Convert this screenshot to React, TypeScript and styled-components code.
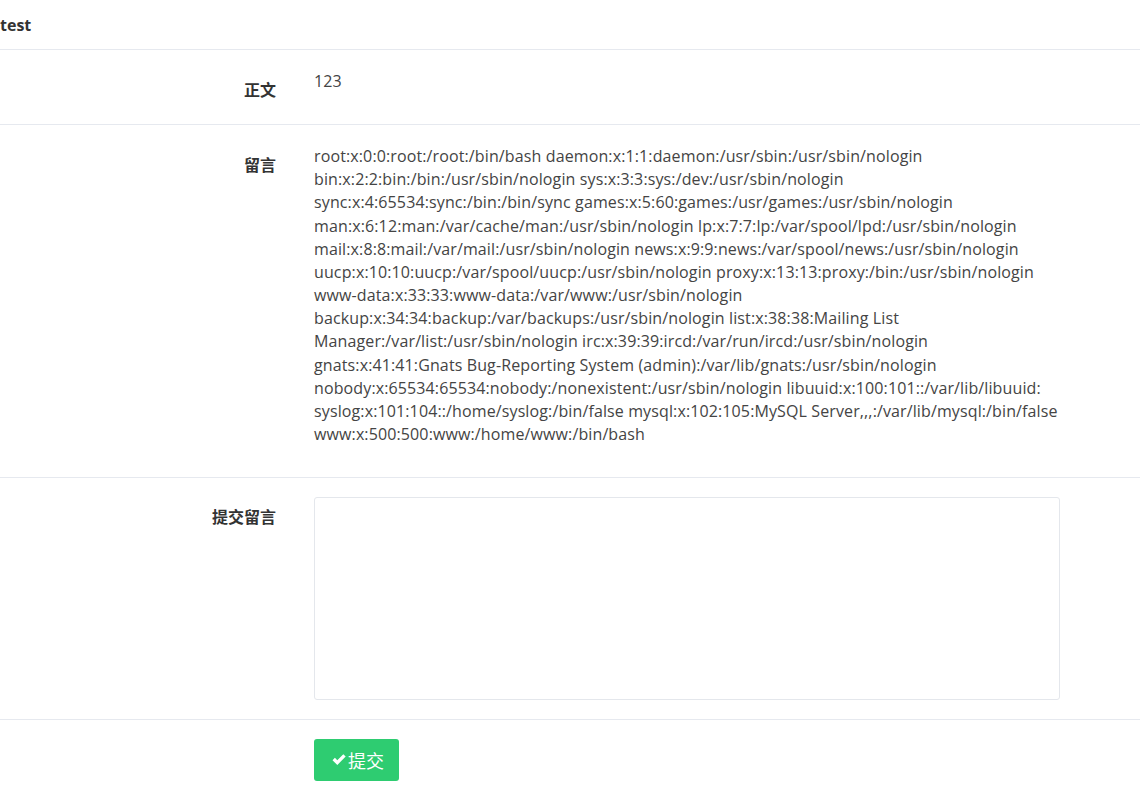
import React from 'react';
import styled, { createGlobalStyle } from 'styled-components';

const lines = [
  'root:x:0:0:root:/root:/bin/bash daemon:x:1:1:daemon:/usr/sbin:/usr/sbin/nologin',
  'bin:x:2:2:bin:/bin:/usr/sbin/nologin sys:x:3:3:sys:/dev:/usr/sbin/nologin',
  'sync:x:4:65534:sync:/bin:/bin/sync games:x:5:60:games:/usr/games:/usr/sbin/nologin',
  'man:x:6:12:man:/var/cache/man:/usr/sbin/nologin lp:x:7:7:lp:/var/spool/lpd:/usr/sbin/nologin',
  'mail:x:8:8:mail:/var/mail:/usr/sbin/nologin news:x:9:9:news:/var/spool/news:/usr/sbin/nologin',
  'uucp:x:10:10:uucp:/var/spool/uucp:/usr/sbin/nologin proxy:x:13:13:proxy:/bin:/usr/sbin/nologin',
  'www-data:x:33:33:www-data:/var/www:/usr/sbin/nologin',
  'backup:x:34:34:backup:/var/backups:/usr/sbin/nologin list:x:38:38:Mailing List',
  'Manager:/var/list:/usr/sbin/nologin irc:x:39:39:ircd:/var/run/ircd:/usr/sbin/nologin',
  'gnats:x:41:41:Gnats Bug-Reporting System (admin):/var/lib/gnats:/usr/sbin/nologin',
  'nobody:x:65534:65534:nobody:/nonexistent:/usr/sbin/nologin libuuid:x:100:101::/var/lib/libuuid:',
  'syslog:x:101:104::/home/syslog:/bin/false mysql:x:102:105:MySQL Server,,,:/var/lib/mysql:/bin/false',
  'www:x:500:500:www:/home/www:/bin/bash',
];

function App() {
  return (
    <>
      <GlobalStyle />
      <Page>
        <Heading>test</Heading>
        <FormRow>
          <Label>正文</Label>
          <Value>123</Value>
        </FormRow>
        <FormRow>
          <Label>留言</Label>
          <Value>
            {lines.map((l, i) => (
              <React.Fragment key={i}>
                {l}
                {i < lines.length - 1 && <br />}
              </React.Fragment>
            ))}
          </Value>
        </FormRow>
        <FormRow tight>
          <Label>提交留言</Label>
          <Field>
            <TextArea />
          </Field>
        </FormRow>
        <FormRow tight last>
          <span />
          <Field>
            <SubmitButton type="button">
              <svg width="16" height="14" viewBox="0 0 16 14">
                <path d="M1.5 7.2 L3.9 4.8 L6.3 7.2 L12.3 1.2 L14.7 3.6 L6.3 12 Z" fill="#fff" />
              </svg>
              提交
            </SubmitButton>
          </Field>
        </FormRow>
      </Page>
    </>
  );
}

export default App;

const GlobalStyle = createGlobalStyle`
  body {
    margin: 0;
    background: #fff;
    font-family: "Open Sans", "Noto Sans CJK SC", sans-serif;
    font-size: 16px;
    color: #444;
  }
`

const Page = styled.div`
  width: 1140px;
`

const Heading = styled.div`
  height: 50px;
  padding: 14px 0 0 0;
  box-sizing: border-box;
  font-weight: bold;
  font-size: 16px;
  line-height: 23px;
  color: #333;
  border-bottom: 1px solid #e6e9ef;
`

const FormRow = styled.div<{ last?: boolean; tight?: boolean }>`
  display: grid;
  grid-template-columns: 276px 746px;
  column-gap: 38px;
  padding: ${p => (p.tight ? '19px' : '20px')} 0 ${p => (p.last ? '15px' : p.tight ? '19px' : '20px')};
  border-bottom: ${p => (p.last ? 'none' : '1px solid #e6e9ef')};
`

const Label = styled.div`
  padding-top: 9px;
  text-align: right;
  font-weight: bold;
  font-size: 16px;
  line-height: 23px;
  color: #333;
`

const Value = styled.p`
  margin: 0 0 11px;
  line-height: 23.15px;
  letter-spacing: 0.12px;
  white-space: nowrap;
`

const Field = styled.div`
  display: flex;
`

const TextArea = styled.textarea`
  width: 746px;
  height: 203px;
  box-sizing: border-box;
  border: 1px solid #e4e7ec;
  border-radius: 3px;
  resize: none;
  outline: none;
`

const SubmitButton = styled.button`
  display: inline-flex;
  align-items: center;
  gap: 1px;
  width: 85px;
  height: 42px;
  padding: 0 0 0 17px;
  box-sizing: border-box;
  border: none;
  border-radius: 3px;
  background: #2ecc71;
  color: #fff;
  font-family: "Noto Sans CJK SC", sans-serif;
  font-size: 18px;
  cursor: pointer;
`
